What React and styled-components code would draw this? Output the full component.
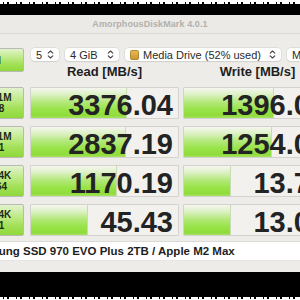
import React from 'react';
import styled, { createGlobalStyle } from 'styled-components';

const Global = createGlobalStyle`
  html, body { margin: 0; padding: 0; background: #000; }
  body { width: 300px; height: 300px; overflow: hidden; font-family: "Liberation Sans", Arial, sans-serif; }
`;

const Screen = styled.div`
  width: 300px;
  height: 300px;
  overflow: hidden;
  display: flex;
  flex-direction: column;
  background: #000;
`;

const Noise = styled.div`
  height: ${p => p.h}px;
  flex: none;
  background:
    repeating-linear-gradient(90deg, transparent 0 3px, #000 3px 4px, transparent 4px 7px, #000 7px 9px, transparent 9px 13px),
    #fff;
  background-size: 100% ${p => p.dots}px;
  background-repeat: no-repeat;
  background-position: ${p => p.side};
`;

const Black = styled.div`
  height: ${p => p.h}px;
  flex: none;
  background: #000;
`;

const Window = styled.div`
  height: 257px;
  flex: none;
  background: #edece8;
  display: flex;
  flex-direction: column;
  overflow: hidden;
`;

const TitleBar = styled.div`
  height: 18px;
  border-bottom: 1px solid #d9d8d4;
  background: #ebeae6;
  display: flex;
  align-items: center;
  justify-content: center;
  font-size: 9px;
  font-weight: bold;
  color: #b2b0ac;
  letter-spacing: 0.1px;
`;

const Body = styled.div`
  margin-left: -36px;
  padding-top: 14px;
  display: flex;
  flex-direction: column;
`;

const Top = styled.div`
  display: grid;
  grid-template-columns: 62px 1fr;
  column-gap: 4px;
`;

const GreenButton = styled.div`
  width: 60px;
  height: ${p => p.h}px;
  box-sizing: border-box;
  border: 1px solid #b9b9b6;
  border-radius: 2px;
  background: linear-gradient(to bottom, #e2f3cd 0%, #c2eb8e 35%, #a2e056 70%, #8fd83a 100%);
  display: flex;
  flex-direction: column;
  align-items: center;
  justify-content: center;
  font-weight: bold;
  color: #1f2a12;
  font-size: ${p => p.fs}px;
  line-height: 1.15;
  text-align: center;
`;

const RightCol = styled.div`
  display: flex;
  flex-direction: column;
`;

const SelectRow = styled.div`
  display: flex;
  gap: 6px;
  padding-left: 1px;
  height: 14px;
`;

const Select = styled.div`
  flex: none;
  width: ${p => p.w}px;
  height: 13px;
  box-sizing: border-box;
  background: #fff;
  border-radius: 4px;
  box-shadow: 0 0 0 0.5px #d2d1cd, 0 0.5px 1px rgba(0,0,0,0.12);
  display: flex;
  align-items: center;
  padding: 0 5px 0 5px;
  gap: 4px;
  font-size: 11px;
  color: #2a2a2a;
  white-space: nowrap;
  overflow: hidden;
`;

const SelectText = styled.span`
  flex: 1;
  overflow: hidden;
`;

const HeadRow = styled.div`
  display: grid;
  grid-template-columns: 149px 149px;
  column-gap: 4px;
  margin-top: 2px;
`;

const Head = styled.div`
  font-size: 13px;
  font-weight: bold;
  line-height: 16px;
  text-align: center;
  color: #1e1e1e;
  white-space: nowrap;
`;

const Results = styled.div`
  display: grid;
  grid-template-columns: 62px 149px 149px;
  grid-auto-rows: 32px;
  column-gap: 4px;
  row-gap: 7px;
  margin-top: 7px;
`;

const Cell = styled.div`
  position: relative;
  box-sizing: border-box;
  border: 1px solid #d3d2ce;
  border-radius: 1px;
  background: #f2f1ed;
  overflow: hidden;
  display: flex;
  align-items: center;
  justify-content: flex-end;
  padding: 4px 5px 0 0;
`;

const Bar = styled.div`
  position: absolute;
  left: 0;
  top: 0;
  bottom: 0;
  border-right: 1px solid #c9dcb4;
  background: linear-gradient(to bottom, #f5f6f1 0%, #dcf1c3 22%, #b2e878 48%, #98e347 72%, #90dc3c 92%, #a6e162 100%);
`;

const Value = styled.span`
  position: relative;
  font-size: 29px;
  font-weight: bold;
  line-height: 29px;
  color: #232323;
  white-space: nowrap;
`;

const Field = styled.div`
  margin: 5px 0 0 0;
  height: 18px;
  background: #fff;
  border-top: 1px solid #dcdbd7;
  border-bottom: 1px solid #e6e5e1;
  display: flex;
  align-items: center;
  padding-left: 4px;
  font-size: 11.5px;
  font-weight: bold;
  color: #1e1e1e;
  white-space: nowrap;
  width: 400px;
`;

const Arrows = () => (
  <svg width="7" height="9" viewBox="0 0 7 9" fill="none" stroke="#444" strokeWidth="1.1" strokeLinecap="round" strokeLinejoin="round">
    <path d="M1.2 3.2 L3.5 1 L5.8 3.2" />
    <path d="M1.2 5.8 L3.5 8 L5.8 5.8" />
  </svg>
);

const DriveIcon = () => (
  <svg width="9" height="10" viewBox="0 0 9 10">
    <defs>
      <linearGradient id="dg" x1="0" y1="0" x2="0" y2="1">
        <stop offset="0" stopColor="#e6bc55" />
        <stop offset="1" stopColor="#c9962c" />
      </linearGradient>
    </defs>
    <rect x="0.5" y="0.5" width="8" height="9" rx="1.2" fill="url(#dg)" stroke="#a57a22" strokeWidth="0.8" />
  </svg>
);

const rows = [
  { label: ['SEQ1M', 'QD8'], read: '3376.04', rw: 95, write: '1396.04', ww: 89 },
  { label: ['SEQ1M', 'QD1'], read: '2837.19', rw: 94, write: '1254.04', ww: 87 },
  { label: ['RND4K', 'QD64'], read: '1170.19', rw: 85, write: '13.74', ww: 46 },
  { label: ['RND4K', 'QD1'], read: '45.43', rw: 56, write: '13.06', ww: 46 },
];

export default function App() {
  return (
    <Screen>
      <Global />
      <Noise h={4} dots={2} side="bottom" />
      <Black h={11} />
      <Window>
        <TitleBar>AmorphousDiskMark 4.0.1</TitleBar>
        <Body>
          <Top>
            <GreenButton h={24} fs={11}>All</GreenButton>
            <RightCol>
              <SelectRow>
                <Select w={28}><SelectText>5</SelectText><Arrows /></Select>
                <Select w={54}><SelectText>4 GiB</SelectText><Arrows /></Select>
                <Select w={156}><DriveIcon /><SelectText>Media Drive (52% used)</SelectText><Arrows /></Select>
                <Select w={80}><SelectText>MB/s</SelectText><Arrows /></Select>
              </SelectRow>
              <HeadRow>
                <Head>Read [MB/s]</Head>
                <Head>Write [MB/s]</Head>
              </HeadRow>
            </RightCol>
          </Top>
          <Results>
            {rows.map((r, i) => (
              <React.Fragment key={i}>
                <GreenButton h={32} fs={10}>
                  <div>{r.label[0]}</div>
                  <div>{r.label[1]}</div>
                </GreenButton>
                <Cell>
                  <Bar style={{ width: r.rw }} />
                  <Value>{r.read}</Value>
                </Cell>
                <Cell>
                  <Bar style={{ width: r.ww }} />
                  <Value>{r.write}</Value>
                </Cell>
              </React.Fragment>
            ))}
          </Results>
          <Field>Samsung SSD 970 EVO Plus 2TB / Apple M2 Max</Field>
        </Body>
      </Window>
      <Black h={25} />
      <Noise h={3} dots={2} side="top" />
    </Screen>
  );
}
